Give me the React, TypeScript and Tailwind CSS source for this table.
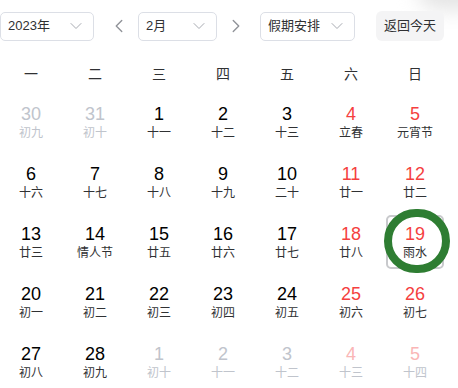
import { ChevronDown, ChevronLeft, ChevronRight } from 'lucide-react'

type Day = { n: number; sub: string; muted?: boolean; weekend?: boolean; selected?: boolean }

const weeks: Day[][] = [
  [
    { n: 30, sub: '初九', muted: true },
    { n: 31, sub: '初十', muted: true },
    { n: 1, sub: '十一' },
    { n: 2, sub: '十二' },
    { n: 3, sub: '十三' },
    { n: 4, sub: '立春', weekend: true },
    { n: 5, sub: '元宵节', weekend: true },
  ],
  [
    { n: 6, sub: '十六' },
    { n: 7, sub: '十七' },
    { n: 8, sub: '十八' },
    { n: 9, sub: '十九' },
    { n: 10, sub: '二十' },
    { n: 11, sub: '廿一', weekend: true },
    { n: 12, sub: '廿二', weekend: true },
  ],
  [
    { n: 13, sub: '廿三' },
    { n: 14, sub: '情人节' },
    { n: 15, sub: '廿五' },
    { n: 16, sub: '廿六' },
    { n: 17, sub: '廿七' },
    { n: 18, sub: '廿八', weekend: true },
    { n: 19, sub: '雨水', weekend: true, selected: true },
  ],
  [
    { n: 20, sub: '初一' },
    { n: 21, sub: '初二' },
    { n: 22, sub: '初三' },
    { n: 23, sub: '初四' },
    { n: 24, sub: '初五' },
    { n: 25, sub: '初六', weekend: true },
    { n: 26, sub: '初七', weekend: true },
  ],
  [
    { n: 27, sub: '初八' },
    { n: 28, sub: '初九' },
    { n: 1, sub: '初十', muted: true },
    { n: 2, sub: '十一', muted: true },
    { n: 3, sub: '十二', muted: true },
    { n: 4, sub: '十三', muted: true, weekend: true },
    { n: 5, sub: '十四', muted: true, weekend: true },
  ],
]

const weekdays = ['一', '二', '三', '四', '五', '六', '日']

function Select({ label, width }: { label: string; width: string }) {
  return (
    <div
      className={`flex items-center justify-between h-[29px] pl-[7px] pr-[7px] border border-[#dcdfe6] rounded-[5px] bg-white text-[13px] text-[#303133] ${width}`}
    >
      <span>{label}</span>
      <ChevronDown size={20} strokeWidth={1.2} className="text-[#a8abb2]" />
    </div>
  )
}

function numColor(d: Day) {
  if (d.muted && d.weekend) return 'text-[#fab6b6]'
  if (d.muted) return 'text-[#c0c4cc]'
  if (d.weekend) return 'text-[#f53f3f]'
  return 'text-black'
}

export default function App() {
  return (
    <div
      className="relative w-[458px] h-[388px] overflow-hidden bg-white"
      style={{ fontFamily: '"Liberation Sans", "Noto Sans CJK SC", sans-serif' }}
    >
      <div className="absolute -top-[30px] -right-[30px] w-[70px] h-[40px] rounded-full bg-[#e4e4e4] blur-[10px]" />

      <div className="relative flex items-center pt-[11px]">
        <Select label="2023年" width="w-[94px]" />
        <ChevronLeft size={22} strokeWidth={1.5} className="ml-[14px] text-[#909399]" />
        <div className="ml-[8px]">
          <Select label="2月" width="w-[79px]" />
        </div>
        <ChevronRight size={22} strokeWidth={1.5} className="ml-[8px] text-[#909399]" />
        <div className="ml-[13px]">
          <Select label="假期安排" width="w-[95px]" />
        </div>
        <button className="ml-[21px] h-[30px] w-[68px] rounded-[6px] bg-[#f4f4f5] text-[13px] text-[#303133]">
          返回今天
        </button>
      </div>

      <div className="grid grid-cols-7 w-[448px] -ml-px mt-[18px] h-[31px] items-center text-[14px] text-[#303133]">
        {weekdays.map((w) => (
          <div key={w} className="text-center">
            {w}
          </div>
        ))}
      </div>

      <div className="grid grid-cols-7 w-[448px] -ml-px mt-[2px]">
        {weeks.flat().map((d, i) => (
          <div key={i} className="h-[60px] flex items-center justify-center">
            <div
              className={`w-[58px] h-[54px] flex flex-col items-center justify-center rounded-[5px] border-2 ${
                d.selected ? 'border-[#c8c9cc]' : 'border-transparent'
              }`}
            >
              <span className={`text-[18px] leading-[20px] ${numColor(d)}`}>{d.n}</span>
              <span
                className={`text-[12px] leading-[16px] mt-px ${d.muted ? 'text-[#c0c4cc]' : 'text-[#303133]'}`}
              >
                {d.sub}
              </span>
            </div>
          </div>
        ))}
      </div>

      <div className="absolute left-[384px] top-[209px] w-[66px] h-[64px] rounded-full border-[8px] border-[#2e7d32]" />
    </div>
  )
}
